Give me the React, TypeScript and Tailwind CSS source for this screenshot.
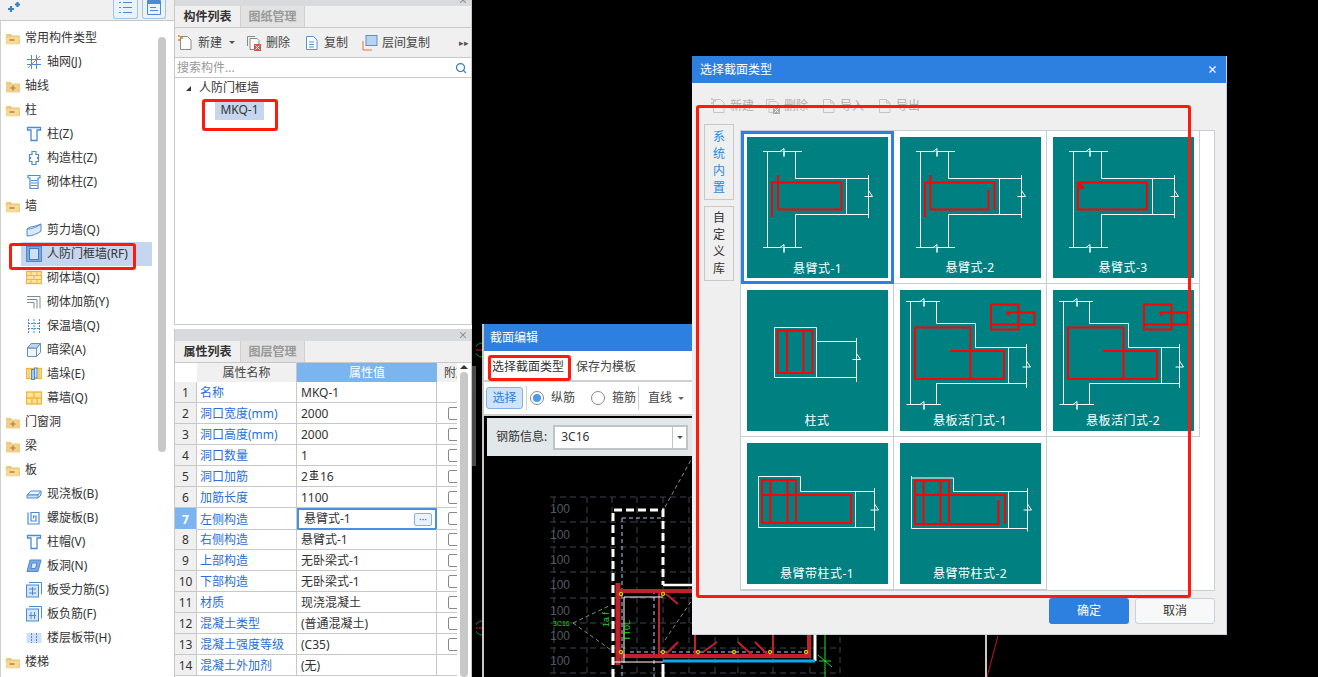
import React from 'react';
import { Search, X } from 'lucide-react';

type TreeRow = { label: string; icon?: string; folder?: 'open' | 'closed'; active?: boolean };

const treeRows: TreeRow[] = [
  { label: '常用构件类型', folder: 'open' },
  { label: '轴网(J)', icon: 'grid' },
  { label: '轴线', folder: 'closed' },
  { label: '柱', folder: 'open' },
  { label: '柱(Z)', icon: 'column' },
  { label: '构造柱(Z)', icon: 'tiecol' },
  { label: '砌体柱(Z)', icon: 'brickcol' },
  { label: '墙', folder: 'open' },
  { label: '剪力墙(Q)', icon: 'shear' },
  { label: '人防门框墙(RF)', icon: 'frame', active: true },
  { label: '砌体墙(Q)', icon: 'brick' },
  { label: '砌体加筋(Y)', icon: 'rebar' },
  { label: '保温墙(Q)', icon: 'insul' },
  { label: '暗梁(A)', icon: 'beam' },
  { label: '墙垛(E)', icon: 'pier' },
  { label: '幕墙(Q)', icon: 'curtain' },
  { label: '门窗洞', folder: 'closed' },
  { label: '梁', folder: 'closed' },
  { label: '板', folder: 'open' },
  { label: '现浇板(B)', icon: 'slab' },
  { label: '螺旋板(B)', icon: 'spiral' },
  { label: '柱帽(V)', icon: 'column' },
  { label: '板洞(N)', icon: 'hole' },
  { label: '板受力筋(S)', icon: 'sbar' },
  { label: '板负筋(F)', icon: 'nbar' },
  { label: '楼层板带(H)', icon: 'band' },
  { label: '楼梯', folder: 'open' },
];

const propRows = [
  ['名称', 'MKQ-1'],
  ['洞口宽度(mm)', '2000'],
  ['洞口高度(mm)', '2000'],
  ['洞口数量', '1'],
  ['洞口加筋', '2|16'],
  ['加筋长度', '1100'],
  ['左侧构造', '悬臂式-1'],
  ['右侧构造', '悬臂式-1'],
  ['上部构造', '无卧梁式-1'],
  ['下部构造', '无卧梁式-1'],
  ['材质', '现浇混凝土'],
  ['混凝土类型', '(普通混凝土)'],
  ['混凝土强度等级', '(C35)'],
  ['混凝土外加剂', '(无)'],
];

function TreeIcon({ name }: { name: string }) {
  const b = '#4a8bd6';
  const y = '#f2b632';
  const common = { width: 16, height: 16, viewBox: '0 0 16 16', fill: 'none', stroke: b, strokeWidth: 1 };
  switch (name) {
    case 'grid':
      return (
        <svg {...common}>
          <path d="M5.5 1v14M10.5 1v14M1 5.5h14M1 10.5h14" />
          <path d="M2 14 14 2" stroke="#e0744a" />
        </svg>
      );
    case 'column':
      return (
        <svg {...common} strokeWidth={1.3}>
          <path d="M1.5 1.5h13v2.5h-3.5v10.5h-6V4H1.5z" />
        </svg>
      );
    case 'tiecol':
      return (
        <svg {...common} strokeWidth={1.2}>
          <path d="M6 1.5h4v3h2.5v3h-1v1h1v3H10v3H6v-3H3.5v-3h1v-1h-1v-3H6z" />
        </svg>
      );
    case 'brickcol':
      return (
        <svg {...common} strokeWidth={1.2}>
          <path d="M2 1.5h12v2.5h-2v10.5H4V4H2z" />
          <path d="M5 6.5h6M5 9h6M5 11.5h6" />
        </svg>
      );
    case 'shear':
      return (
        <svg {...common}>
          <path d="M1 7c5 0 10-2 14-5v7c-4 3-9 5-14 5z" fill="#dbe8f7" />
          <path d="M1 7l3-2c4 0 8-2 11-3" />
        </svg>
      );
    case 'frame':
      return (
        <svg {...common}>
          <rect x="0.5" y="0.5" width="15" height="15" fill="#7fa9dd" />
          <rect x="3.5" y="2.5" width="9" height="11" fill="#cfe0f5" stroke="#3f7cc8" />
        </svg>
      );
    case 'brick':
      return (
        <svg {...common} stroke={y}>
          <rect x="0.5" y="1.5" width="15" height="12" fill="#fde6a8" strokeWidth={1.3} />
          <path d="M1 5.5h14M1 9.5h14M5 1.5v4M11 1.5v4M8 5.5v4M5 9.5v4M11 9.5v4" />
        </svg>
      );
    case 'rebar':
      return (
        <svg {...common} stroke="#7d8a96">
          <path d="M1 2.5h13v12M1 5.5h10v9M1 8.5h7v6" />
        </svg>
      );
    case 'insul':
      return (
        <svg {...common} strokeDasharray="2 1">
          <path d="M2.5 1v14M8 1v14M13.5 1v14M2 5.5h12M2 10.5h12" />
        </svg>
      );
    case 'beam':
      return (
        <svg {...common} stroke="#6f8fb5">
          <path d="M1.5 6l4-4.5h9v9l-4 4h-9z" fill="#eef4fb" />
          <path d="M1.5 6h9v9M10.5 6l4-4.5" />
          <path d="M5 1.5 1.5 6h9l4-4.5z" fill="#bcd5f0" />
        </svg>
      );
    case 'pier':
      return (
        <svg {...common} stroke={y}>
          <rect x="0.5" y="2.5" width="15" height="10" fill="#fde6a8" strokeWidth={1.3} />
          <path d="M3 2.5v10M13 2.5v10" />
          <rect x="5.5" y="3.5" width="3" height="10" fill="#a9c9ee" stroke={b} />
          <rect x="8.5" y="2" width="2.5" height="10" fill="#d6e5f7" stroke={b} />
        </svg>
      );
    case 'curtain':
      return (
        <svg {...common} stroke={y} strokeWidth={1.3}>
          <rect x="0.5" y="2" width="15" height="12" fill="#fde3a0" />
          <path d="M8 2v6M1 8h14M6 8v6M11 8v6" />
        </svg>
      );
    case 'slab':
      return (
        <svg {...common}>
          <path d="M1 9l4-4h10l-3 4z" fill="#eef4fb" />
          <path d="M1 9h11v3H1zM12 12l3-3V5" fill="#cfe0f5" />
        </svg>
      );
    case 'spiral':
      return (
        <svg {...common} strokeWidth={1.2}>
          <path d="M2 2.5V14h11V2.5H5v8.5h5V6H7.5v2.5" />
        </svg>
      );
    case 'hole':
      return (
        <svg {...common}>
          <path d="M4 2h11l-3 11.5H1z" fill="#7fa9dd" />
          <path d="M6 5h5l-1.5 5.5H5z" fill="#dbe8f7" />
        </svg>
      );
    case 'sbar':
    case 'nbar':
      return (
        <svg {...common}>
          <rect x="0.5" y="3" width="12" height="12" fill="#d6e5f7" />
          <path d="M3 0.5h12.5v12" />
          {name === 'sbar' ? (
            <path d="M3 7h7M3 11h7M6.5 5v8" />
          ) : (
            <path d="M5 6v7M8.5 6v7M3 9.5h7" />
          )}
        </svg>
      );
    case 'band':
      return (
        <svg {...common}>
          <rect x="0.5" y="3" width="15" height="10" fill="#cfe0f5" stroke="none" />
          <path d="M5.5 3v10M10.5 3v10" strokeDasharray="2 1" />
        </svg>
      );
    default:
      return null;
  }
}

function FolderIcon({ open }: { open: boolean }) {
  return (
    <svg width="16" height="13" viewBox="0 0 16 13" className="shrink-0">
      <path d="M1 2h5l1 1.5h8V12H1z" fill="#eec97a" />
      {open ? (
        <path d="M0 5h12l3 0-2 7.5H2z" fill="#f5d998" />
      ) : (
        <path d="M1 4h14v8.5H1z" fill="#f1cf8a" />
      )}
      {open ? (
        <path d="M4.5 8h5" stroke="#b98f3a" strokeWidth="1.6" />
      ) : (
        <path d="M5.5 8h5M8 5.5v5" stroke="#b98f3a" strokeWidth="1.6" />
      )}
    </svg>
  );
}

function LeftTree() {
  return (
    <div className="w-[174px] h-full shrink-0 bg-white flex flex-col">
      <div className="h-[21px] bg-[#f0f0f0] flex items-start pl-[7px] pr-[8px] border-b border-[#c8c8c8]">
        <svg width="14" height="12" viewBox="0 0 14 12" className="mt-[1px]">
          <path d="M4 5v6M1 8h6M10.5 1v5M8 3.5h5" stroke="#3c7fd0" strokeWidth="2.2" />
        </svg>
        <div className="ml-auto flex gap-[4px]">
          <div className="w-[25px] h-[19px] rounded-b-[3px] border border-t-0 border-[#9cc4ee] bg-[#eaf3fc]">
            <svg width="23" height="18" viewBox="0 0 23 18" fill="none" stroke="#4a8bd6">
              <path d="M5 2.5h2M5 7.5h2M5 12.5h2M9 2.5h9M9 7.5h9M9 12.5h9" />
            </svg>
          </div>
          <div className="w-[24px] h-[19px] rounded-b-[3px] border border-t-0 border-[#9cc4ee] bg-[#eaf3fc]">
            <svg width="22" height="18" viewBox="0 0 22 18" fill="none" stroke="#4a8bd6">
              <path d="M4.5 0.5h13v14h-13z" />
              <path d="M5 2.5h12" strokeWidth="3" />
              <path d="M7 7.5h6M7 10.5h8" />
            </svg>
          </div>
        </div>
      </div>
      <div className="flex flex-1 min-h-0 overflow-hidden border-l border-[#d0d0d0]">
        <div className="flex-1 pt-[5px]">
          {treeRows.map((row) =>
            row.folder ? (
              <div key={row.label} className="h-[24px] flex items-center pl-[4px] gap-[4px] text-[12px] text-[#333]">
                <FolderIcon open={row.folder === 'open'} />
                <span>{row.label}</span>
              </div>
            ) : (
              <div
                key={row.label}
                className={`h-[24px] ml-[20px] flex items-center pl-[5px] gap-[5px] text-[12px] text-[#333] ${
                  row.active ? 'bg-[#c5d6ee] w-[131px]' : ''
                }`}
              >
                <TreeIcon name={row.icon ?? ''} />
                <span>{row.label}</span>
              </div>
            )
          )}
        </div>
        <div className="w-[17px] shrink-0 pt-[16px] pl-[1px]">
          <div className="w-[8px] h-[415px] rounded-[4px] bg-[#c8c8c8]" />
        </div>
      </div>
    </div>
  );
}

function DocIcon({ kind, faded }: { kind: 'new' | 'del' | 'copy' | 'plain'; faded?: boolean }) {
  const s = faded ? '#c4c4c4' : '#8a8a8a';
  return (
    <svg width="16" height="16" viewBox="0 0 16 16" fill="none" className="shrink-0">
      {kind === 'del' && <path d="M1.5 11V1.5H9" stroke={s} />}
      <path
        d={kind === 'del' ? 'M4 3.5h7l2 2v9H4z' : 'M2.5 1.5h7l3.5 3.5v9.5h-10.5z'}
        stroke={kind === 'copy' ? '#5b8fd0' : s}
        fill={faded ? 'none' : '#fff'}
      />
      {kind === 'new' && (
        <path d="M0 0h2v2H0zM3 2h2v2H3zM0 4h2v2H0z" fill={faded ? '#ccc' : '#f0a030'} />
      )}
      {kind === 'del' && <rect x="8" y="9" width="7" height="7" fill={faded ? '#aaa' : '#d8504a'} />}
      {kind === 'del' && <path d="M9.5 10.5l4 4M13.5 10.5l-4 4" stroke="#fff" />}
      {kind === 'copy' && <path d="M5 7h5M5 9.5h5M5 12h5" stroke="#5b8fd0" />}
      {kind === 'plain' && <path d="M9.5 1.5V5H13" stroke={s} />}
    </svg>
  );
}

function ComponentPanel() {
  return (
    <div className="h-[325px] shrink-0 flex flex-col bg-white border-x border-b border-[#c8c8c8]">
      <div className="h-[6px] shrink-0 bg-[#d8dadd] relative overflow-hidden">
        <X className="absolute right-[3px] top-[-5px] w-[10px] h-[10px] text-[#888]" strokeWidth={2.5} />
      </div>
      <div className="h-[22px] shrink-0 bg-[#f0f0f0] flex border-b border-[#c8c8c8] text-[12px]">
        <div className="w-[65px] flex items-center justify-center font-bold text-[#333]">构件列表</div>
        <div className="w-[65px] flex items-center justify-center font-bold text-[#999] bg-[#e2e2e2] border-x border-[#d0d0d0]">
          图纸管理
        </div>
      </div>
      <div className="h-[30px] shrink-0 bg-[#f0f0f0] border-b border-[#c8c8c8] flex items-center pl-[3px] pr-[2px] text-[12px] text-[#444]">
        <DocIcon kind="new" />
        <span className="ml-[4px]">新建</span>
        <span className="ml-[7px] w-0 h-0 border-x-[3px] border-x-transparent border-t-[3px] border-t-[#555]" />
        <span className="ml-[11px]"><DocIcon kind="del" /></span>
        <span className="ml-[4px]">删除</span>
        <span className="ml-[14px]"><DocIcon kind="copy" /></span>
        <span className="ml-[4px]">复制</span>
        <svg width="16" height="16" viewBox="0 0 16 16" fill="none" className="ml-[14px]">
          <rect x="4" y="0.5" width="11" height="10" fill="#b9d3f2" stroke="#5b8fd0" />
          <path d="M1 6v9h9" stroke="#e8782a" />
        </svg>
        <span className="ml-[4px]">层间复制</span>
        <span className="ml-auto text-[9px] leading-none text-[#555]">▸▸</span>
      </div>
      <div className="h-[20px] shrink-0 border-b border-[#c8c8c8] flex items-center pl-[2px] pr-[4px] text-[12px] text-[#999]">
        <span>搜索构件...</span>
        <Search className="ml-auto w-[12px] h-[12px] text-[#2a80c8]" strokeWidth={2.5} />
      </div>
      <div className="flex items-center h-[22px] mt-[-1px] pl-[11px] text-[12px] text-[#333]">
        <span className="w-0 h-0 border-l-[5px] border-l-transparent border-b-[5px] border-b-[#333]" />
        <span className="ml-[8px]">人防门框墙</span>
      </div>
      <div className="ml-[40px] w-[49px] h-[21px] bg-[#c5d6ee] flex items-center justify-center text-[12px] text-[#333]">
        MKQ-1
      </div>
    </div>
  );
}

function RebarValue() {
  return (
    <span className="flex items-center">
      2
      <svg width="10" height="11" viewBox="0 0 10 11" fill="none" stroke="#333" className="mx-[1px] mb-[3px]">
        <path d="M1 1.5h8M2 4h6v3H2zM5 0v10M0.5 9.5h9" />
      </svg>
      16
    </span>
  );
}

function PropertyPanel() {
  return (
    <div className="flex-1 min-h-0 mt-[4px] flex flex-col bg-white border-x border-[#c8c8c8] overflow-hidden">
      <div className="h-[12px] shrink-0 bg-[#d8dadd] relative">
        <X className="absolute right-[3px] top-[1px] w-[10px] h-[10px] text-[#888]" strokeWidth={2.5} />
      </div>
      <div className="h-[22px] shrink-0 bg-[#f0f0f0] flex border-b border-[#c8c8c8] text-[12px]">
        <div className="w-[65px] flex items-center justify-center font-bold text-[#333]">属性列表</div>
        <div className="w-[65px] flex items-center justify-center font-bold text-[#999] bg-[#e2e2e2] border-x border-[#d0d0d0]">
          图层管理
        </div>
      </div>
      <div className="flex flex-1 min-h-0">
        <div className="w-[282px] text-[12px] text-[#333]">
          <div className="grid grid-cols-[22px_100px_140px_20px] h-[19px]">
            <div className="bg-white" />
            <div className="bg-[#f0f0f0] flex items-center justify-center border-r border-[#c8c8c8] text-[#444]">属性名称</div>
            <div className="bg-[#7ab5f0] flex items-center justify-center text-white">属性值</div>
            <div className="bg-[#f0f0f0] overflow-hidden whitespace-nowrap pl-[7px] leading-[19px] text-[#444]">附加</div>
          </div>
          {propRows.map(([name, value], i) => {
            const sel = i === 6;
            return (
              <div key={name} className="grid grid-cols-[22px_100px_140px_20px] h-[21px]">
                <div
                  className={`flex items-center justify-center pt-[2px] border-b border-r border-[#c8c8c8] ${
                    sel ? 'bg-[#7ab5f0] text-white font-bold' : 'bg-[#f0f0f0]'
                  }`}
                >
                  {i + 1}
                </div>
                <div className="flex items-center pl-[3px] pt-[2px] border-b border-r border-[#c8c8c8] text-[#2a6fd8] whitespace-nowrap">
                  {name}
                </div>
                {sel ? (
                  <div className="flex items-center pl-[5px] pr-[3px] border-2 border-[#4a90e2]">
                    <span>{value}</span>
                    <span className="ml-auto w-[18px] h-[13px] rounded-[2px] border border-[#7fb2ea] bg-[#eaf3fc] flex items-center justify-center text-[10px] leading-none text-[#4a6a8a]">
                      ···
                    </span>
                  </div>
                ) : (
                  <div className="flex items-center pl-[4px] pt-[2px] border-b border-r border-[#c8c8c8] whitespace-nowrap">
                    {value === '2|16' ? <RebarValue /> : value}
                  </div>
                )}
                <div className="flex items-center pl-[11px] border-b border-[#c8c8c8] overflow-hidden">
                  {i > 0 && i < 13 && <div className="w-[12px] h-[13px] shrink-0 rounded-[2px] border border-[#888] bg-white" />}
                </div>
              </div>
            );
          })}
        </div>
        <div className="w-[14px] shrink-0 flex flex-col items-center bg-white">
          <span className="mt-[2px] w-0 h-0 border-x-[4px] border-x-transparent border-b-[4px] border-b-[#333]" />
          <div className="mt-[3px] w-[8px] flex-1 rounded-[4px] bg-[#c8c8c8]" />
        </div>
      </div>
    </div>
  );
}

function SectionCanvas() {
  const rowsY = [497, 522, 547, 572, 598, 623, 648, 673];
  const colsX = [554, 587, 612, 637, 663, 689, 715, 738, 773, 810, 840];
  const labelsY = [513, 539, 564, 589, 615, 640, 665];
  const dots = [[621, 594], [663, 594], [621, 652], [663, 652], [698, 652], [734, 652], [770, 652], [806, 652]];
  return (
    <svg viewBox="484 456 500 221" width="500" height="221" className="block" fill="none">
      {rowsY.map((y) => (
        <path key={y} d={`M550 ${y}H840`} stroke="#3e454e" strokeDasharray="6 4" />
      ))}
      {colsX.map((x) => (
        <path key={x} d={`M${x} 497V677`} stroke="#3e454e" strokeDasharray="6 4" />
      ))}
      {labelsY.map((y) => (
        <text key={y} x="550" y={y} fill="#4f5964" fontSize="12" fontFamily="Liberation Sans, sans-serif">
          100
        </text>
      ))}
      <path d="M665 507 691 460M573 623 611 605M573 623 611 650M665 640 692 600" stroke="#8a8a8a" strokeDasharray="4 3" />
      <path d="M622 518V677M622 518H663M654 590V677M630 652H806" stroke="#a8cdf0" strokeDasharray="4 3" />
      <path d="M613 677V510H663V585" stroke="#fff" strokeWidth="3" strokeDasharray="8 4" />
      <path d="M663 585H692" stroke="#fff" strokeWidth="2.5" />
      <path d="M815 635V661" stroke="#fff" strokeWidth="3" />
      <path d="M663 664V677" stroke="#fff" strokeWidth="3" />
      <path d="M618 583V665" stroke="#c4202a" strokeWidth="5" />
      <path d="M618 591H692M616 656H809V635" stroke="#c4202a" strokeWidth="4" />
      <path d="M659 591V656M695 635V656M773 635V656" stroke="#c4202a" strokeWidth="2" />
      <path d="M666 594 678 604M666 654 678 642M703 652 717 642M738 642 752 655M755 642 768 655" stroke="#c4202a" strokeWidth="2" />
      <path d="M663 597H624V663M612 662H663" stroke="#fff" />
      {dots.map(([x, y]) => (
        <circle key={x + '-' + y} cx={x} cy={y} r="1.8" stroke="#f2d21a" fill="#6a5a10" />
      ))}
      <path d="M663 661H815" stroke="#0ea5e9" strokeWidth="3" />
      <path d="M825 635V677M818 655 832 667M819 661H831" stroke="#22dd22" />
      <text x="553" y="626" fill="#22dd22" fontSize="7" fontFamily="Liberation Sans, sans-serif">3C16</text>
      <text x="0" y="0" transform="translate(609 627) rotate(-90)" fill="#22dd22" fontSize="9" fontFamily="Liberation Sans, sans-serif">1a f</text>
      <text x="0" y="0" transform="translate(630 641) rotate(-90)" fill="#22dd22" fontSize="9" fontFamily="Liberation Sans, sans-serif">TT0L</text>
    </svg>
  );
}

function SectionDialog() {
  return (
    <div className="absolute left-[482px] top-[324px] w-[505px] h-[353px] bg-black flex flex-col overflow-hidden border-l-2 border-r-2 border-[#c8c8c8]">
      <div className="h-[27px] shrink-0 bg-[#2d7fe0] flex items-center pl-[6px] text-[12px] text-white">截面编辑</div>
      <div className="h-[29px] shrink-0 bg-white flex items-center pl-[8px] pt-[2px] gap-[12px] text-[12px] text-[#444]">
        <span className="text-[#333]">选择截面类型</span>
        <span>保存为模板</span>
      </div>
      <div className="h-[2px] shrink-0 bg-[#d0d0d0]" />
      <div className="h-[32px] shrink-0 bg-white flex items-center pl-[2px] text-[12px] text-[#444]">
        <div className="w-[37px] h-[22px] rounded-[3px] border border-[#7fb2ea] bg-[#cfe4fb] flex items-center justify-center text-[#2a80e0]">
          选择
        </div>
        <div className="w-px h-[24px] bg-[#d0d0d0] ml-[3px]" />
        <div className="w-[14px] h-[14px] ml-[3px] rounded-full border border-[#888] flex items-center justify-center">
          <div className="w-[8px] h-[8px] rounded-full bg-[#4a9af0]" />
        </div>
        <span className="ml-[7px]">纵筋</span>
        <div className="w-[14px] h-[14px] ml-[16px] rounded-full border border-[#888]" />
        <span className="ml-[7px]">箍筋</span>
        <div className="w-px h-[24px] bg-[#d0d0d0] ml-[2px]" />
        <span className="ml-[9px]">直线</span>
        <span className="ml-[6px] w-0 h-0 border-x-[3px] border-x-transparent border-t-[3px] border-t-[#666]" />
      </div>
      <div className="h-[2px] shrink-0 bg-[#d0d0d0]" />
      <div className="flex-1 min-h-0 pt-[2px]">
        <div className="ml-[3px] h-[38px] bg-[#e2e8ea] flex items-center pl-[9px] text-[12px] text-[#333]">
          <span>钢筋信息:</span>
          <div className="ml-[6px] w-[135px] h-[25px] border-2 border-[#c0c4c8] bg-white flex items-center pl-[6px]">
            <span>3C16</span>
            <div className="ml-auto w-[14px] h-full border-l border-[#c0c4c8] flex items-center justify-center">
              <span className="w-0 h-0 border-x-[3px] border-x-transparent border-t-[3px] border-t-[#555]" />
            </div>
          </div>
        </div>
        <SectionCanvas />
      </div>
    </div>
  );
}

const W = '#ffffff';
const R = '#ff0000';

function Brk({ x, y, vert }: { x: number; y: number; vert?: boolean }) {
  const d = vert
    ? `M${x - 4} ${y + 2}H${x + 4}L${x} ${y - 4}V${y + 6}`
    : `M${x - 3} ${y}L${x + 1} ${y - 3}V${y + 5}L${x + 1} ${y}H${x + 4}`;
  return <path d={d} stroke={W} strokeWidth="1" fill="#008080" />;
}

function TShape() {
  return (
    <>
      <path
        d="M16 14.5H55M20.5 14.5V110.5M48.5 14.5V41.5H121.5M121.5 38V81M48.5 77.5H121.5M48.5 77.5V110.5M16 110.5H55M99.5 41.5V77.5"
        stroke={W}
      />
      <Brk x={36} y={14.5} />
      <Brk x={36} y={110.5} />
      <Brk x={121.5} y={57.5} vert />
    </>
  );
}

function DoorShape() {
  return (
    <>
      <path
        d="M6 11.5H40M10.5 11.5V114.5M36.5 11.5V33.5H75.5V57.5H126.5M126.5 54V98M36.5 93.5H126.5M108.5 57.5V93.5M36.5 93.5V114.5M6.5 114.5H41"
        stroke={W}
      />
      <Brk x={23} y={11.5} />
      <Brk x={23} y={114.5} />
      <Brk x={126.5} y={75} vert />
      <path
        d="M15 37.5H70.5V89H15ZM50 61H104V89H70.5M91 14.5H118.5V39.5H91ZM106.5 22.5H134.5V34.5H91M106.5 22.5 109 26"
        stroke={R}
        strokeWidth="2"
        strokeLinejoin="round"
      />
    </>
  );
}

const tileArt: React.ReactNode[] = [
  <>
    <TShape />
    <path d="M31 45.5H94.5V72.5H31V38M31 45.5H25V80" stroke={R} strokeWidth="2" strokeLinejoin="round" />
  </>,
  <>
    <TShape />
    <path d="M25 80V45.5H94.5V73M30.5 38V72.5H88.5V53" stroke={R} strokeWidth="2" strokeLinejoin="round" />
  </>,
  <>
    <TShape />
    <path d="M25 45.5H94V72.5H25ZM25 45.5 31 51M25 49 29 52" stroke={R} strokeWidth="2" strokeLinejoin="round" />
  </>,
  <>
    <path d="M27.5 37.5H69.5V87.5H27.5ZM69.5 51.5H109.5M69.5 87.5H109.5M109.5 48V92" stroke={W} />
    <Brk x={109.5} y={67.5} vert />
    <path d="M30.5 40.5H65.5V83H30.5ZM40 40.5V83M56.5 40.5V83" stroke={R} strokeWidth="2" strokeLinejoin="round" />
  </>,
  <DoorShape />,
  <DoorShape />,
  <>
    <path d="M11.5 33.5H53.5V48.5H127M127.5 45V87.5M11.5 33.5V84.5H127.5M108.5 48.5V84.5" stroke={W} />
    <Brk x={127.5} y={65} vert />
    <path
      d="M15 37H49V80H15ZM15 52H104V80H49M23.5 37V80M40.5 37V80"
      stroke={R}
      strokeWidth="2"
      strokeLinejoin="round"
    />
  </>,
  <>
    <path d="M11.5 35H53.5V48.5H127M127.5 45V88.5M11.5 33V85.5H127.5M108.5 48.5V85.5" stroke={W} />
    <Brk x={127.5} y={65} vert />
    <path
      d="M15 37.5H49V81H15ZM15 52H105V81M23.5 37.5V81M40.5 37.5V81M49 81H98.5V57"
      stroke={R}
      strokeWidth="2"
      strokeLinejoin="round"
    />
  </>,
];

const tileLabels = ['悬臂式-1', '悬臂式-2', '悬臂式-3', '柱式', '悬板活门式-1', '悬板活门式-2', '悬臂带柱式-1', '悬臂带柱式-2'];

function SectionTypeDialog() {
  return (
    <div className="absolute left-[692px] top-[56px] w-[535px] h-[579px] bg-[#efefef] flex flex-col border-r border-b border-[#c8d0dc]">
      <div className="h-[27px] shrink-0 bg-[#2d7fe0] flex items-center pl-[8px] pr-[8px] text-[12px] text-white">
        <span>选择截面类型</span>
        <X className="ml-auto w-[11px] h-[11px]" strokeWidth={2.5} />
      </div>
      <div className="h-[41px] shrink-0 pt-[15px] pl-[19px] text-[12px] text-[#b0b0b0]">
        <div className="flex items-center h-[16px]">
          <DocIcon kind="new" faded />
          <span className="ml-[3px]">新建</span>
          <span className="ml-[11px]"><DocIcon kind="del" faded /></span>
          <span className="ml-[3px]">删除</span>
          <span className="ml-[13px]"><DocIcon kind="plain" faded /></span>
          <span className="ml-[3px]">导入</span>
          <span className="ml-[13px]"><DocIcon kind="plain" faded /></span>
          <span className="ml-[3px]">导出</span>
        </div>
      </div>
      <div className="flex pl-[12px] gap-[6px] mt-[-1px]">
        <div className="w-[30px] shrink-0 flex flex-col gap-[6px] pt-[1px]">
          <div className="h-[76px] border border-[#c8c8c8] flex flex-col items-center justify-center gap-[5px] text-[12px] leading-[12px] text-[#2a8ae0]">
            <span>系</span><span>统</span><span>内</span><span>置</span>
          </div>
          <div className="h-[75px] border border-[#c8c8c8] flex flex-col items-center justify-center gap-[5px] text-[12px] leading-[12px] text-[#333]">
            <span>自</span><span>定</span><span>义</span><span>库</span>
          </div>
        </div>
        <div className="w-[475px] h-[461px] mt-[7px] bg-white border border-[#c8ccd4]">
          <div className="grid grid-cols-[repeat(3,153px)] auto-rows-[153px] w-[459px]">
            {tileLabels.map((label, i) => (
              <div
                key={label}
                className={`flex items-center justify-center ${
                  i === 0 ? 'border-[3px] border-[#2d7fe0]' : 'border-r border-b border-[#c8ccd4]'
                }`}
              >
                <div className="w-[141px] h-[141px] bg-[#008080] flex flex-col">
                  <svg width="141" height="122" viewBox="0 0 141 122" fill="none" className="shrink-0">
                    {tileArt[i]}
                  </svg>
                  <div className="flex-1 flex items-center justify-center text-[12px] leading-none text-white tracking-[0.5px]">
                    {label}
                  </div>
                </div>
              </div>
            ))}
          </div>
        </div>
      </div>
      <div className="flex justify-end gap-[6px] pr-[11px] mt-[7px] text-[12px]">
        <div className="w-[80px] h-[26px] rounded-[3px] bg-[#2d7fe0] text-white flex items-center justify-center">确定</div>
        <div className="w-[80px] h-[26px] rounded-[3px] bg-[#f8f8f8] border border-[#c8d0dc] text-[#333] flex items-center justify-center">取消</div>
      </div>
    </div>
  );
}

export default function App() {
  return (
    <div className="relative w-[1318px] h-[677px] overflow-hidden bg-black flex font-['Noto_Sans','Noto_Sans_CJK_SC',sans-serif]">
      <LeftTree />
      <div className="w-[298px] h-full shrink-0 bg-white flex flex-col">
        <ComponentPanel />
        <PropertyPanel />
      </div>
      {/* divider between the panels and the drawing */}
      <div className="w-[4px] h-[100px] mt-[366px] bg-[#4a4a4a] shrink-0" />

      {/* drawing behind the windows */}
      <svg className="absolute left-[476px] top-0" width="842" height="677" viewBox="476 0 842 677" fill="none">
        <path d="M482 343a7 7 0 0 0 0 14M482 621a7 7 0 0 0 0 14" stroke="#1a8a1a" />
        <path d="M476 350h6M476 628h6" stroke="#c4202a" />
        <path d="M998 636 987 677" stroke="#d01020" />
      </svg>

      <SectionDialog />
      <SectionTypeDialog />

      {/* red markup boxes */}
      <div className="absolute left-[9px] top-[243px] w-[127px] h-[27px] rounded-[3px] border-[3px] border-[#ff1a0d]" />
      <div className="absolute left-[202px] top-[99px] w-[76px] h-[32px] rounded-[3px] border-[3px] border-[#ff1a0d]" />
      <div className="absolute left-[488px] top-[355px] w-[83px] h-[26px] rounded-[3px] border-[3px] border-[#ff1a0d]" />
      <div className="absolute left-[696px] top-[105px] w-[495px] h-[493px] rounded-[3px] border-[3px] border-[#ff1a0d]" />
    </div>
  );
}
